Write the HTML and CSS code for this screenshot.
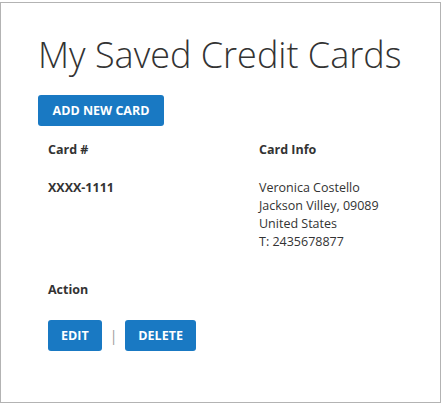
FILE: index.html
```html
<!DOCTYPE html>
<html>
<head>
<meta charset="utf-8">
<link rel="stylesheet" href="styles.css">
</head>
<body>
<div class="frame">
  <h1 class="title">My Saved Credit Cards</h1>
  <button class="btn btn-add">ADD NEW CARD</button>
  <div class="cards">
    <div class="th">Card #</div>
    <div class="th">Card Info</div>
    <div class="num">XXXX-1111</div>
    <div class="info">Veronica Costello<br>Jackson Villey, 09089<br>United States<br>T: 2435678877</div>
  </div>
  <div class="action-label">Action</div>
  <div class="actions">
    <button class="btn btn-small">EDIT</button>
    <span class="sep">|</span>
    <button class="btn btn-small">DELETE</button>
  </div>
</div>
</body>
</html>
```
FILE: styles.css
```css
html, body { margin: 0; padding: 0; background: #fff; }
body { font-family: "Open Sans", sans-serif; color: #333; }
.frame {
  margin-top: 2px;
  width: 441px;
  height: 401px;
  box-sizing: border-box;
  border: 1px solid #b3b3b3;
  padding: 27px 0 0 37px;
}
.title {
  margin: 0;
  font-weight: 300;
  font-size: 36px;
  line-height: 50px;
  color: #333;
}
.btn {
  background: #1979c3;
  color: #fff;
  border: none;
  border-radius: 3px;
  font-family: "Open Sans", sans-serif;
  font-weight: 700;
  font-size: 12.5px;
  padding: 0;
  height: 31px;
}
.btn-add { margin-top: 15px; width: 126px; }
.cards {
  display: grid;
  grid-template-columns: 211px auto;
  padding-left: 10px;
  margin-top: 15px;
  font-size: 12.5px;
  line-height: 18px;
}
.th { font-weight: 700; }
.num { font-weight: 700; margin-top: 20px; }
.info { margin-top: 20px; }
.action-label {
  font-weight: 700;
  font-size: 12.5px;
  line-height: 18px;
  margin: 30px 0 0 10px;
}
.actions {
  display: flex;
  align-items: center;
  gap: 8px;
  margin: 21px 0 0 10px;
}
.btn-small { padding: 0 13px; }
.sep { color: #999; font-size: 14px; }
```
